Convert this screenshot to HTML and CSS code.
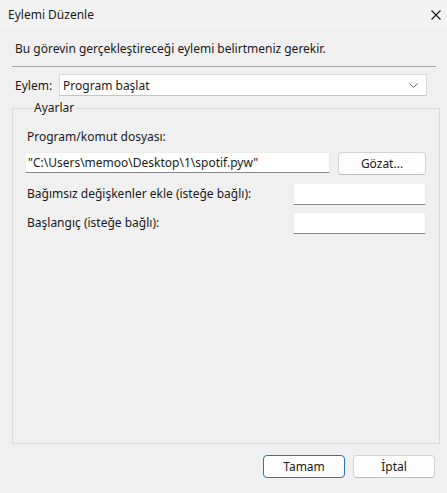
FILE: index.html
```html
<!DOCTYPE html>
<html lang="tr">
<head>
  <meta charset="UTF-8">
  <meta name="viewport" content="width=device-width, initial-scale=1.0">
  <title>Eylemi Düzenle</title>
  <link rel="stylesheet" href="styles.css">
</head>
<body>
  <div class="window">
    <div class="titlebar">
      <span class="title">Eylemi Düzenle</span>
      <svg class="close" width="10" height="10" viewBox="0 0 10 10">
        <path d="M0.5 0.5 L9.5 9.5 M9.5 0.5 L0.5 9.5" stroke="#1a1a1a" stroke-width="1.1" fill="none"/>
      </svg>
    </div>

    <p class="intro">Bu görevin gerçekleştireceği eylemi belirtmeniz gerekir.</p>
    <div class="separator"></div>

    <div class="action-row">
      <span class="label">Eylem:</span>
      <div class="select">
        <span>Program başlat</span>
        <svg width="9" height="5" viewBox="0 0 9 5">
          <path d="M0.5 0.5 L4.5 4.5 L8.5 0.5" stroke="#5f5f5f" stroke-width="1" fill="none"/>
        </svg>
      </div>
    </div>

    <fieldset class="settings">
      <legend>Ayarlar</legend>
      <div class="field-label">Program/komut dosyası:</div>
      <div class="program-row">
        <div class="textbox program">"C:\Users\memoo\Desktop\1\spotif.pyw"</div>
        <div class="button">Gözat...</div>
      </div>
      <div class="option-row">
        <span class="field-label">Bağımsız değişkenler ekle (isteğe bağlı):</span>
        <div class="textbox small"></div>
      </div>
      <div class="option-row">
        <span class="field-label">Başlangıç (isteğe bağlı):</span>
        <div class="textbox small"></div>
      </div>
    </fieldset>

    <div class="footer">
      <div class="button primary">Tamam</div>
      <div class="button">İptal</div>
    </div>
  </div>
</body>
</html>
```

FILE: styles.css
```css
* {
  box-sizing: border-box;
}

body {
  margin: 0;
  background-color: #f0f0f0;
  font-family: "Noto Sans", "Open Sans", sans-serif;
  font-size: 12px;
  color: #1a1a1a;
}

.window {
  width: 447px;
  height: 493px;
  display: flex;
  flex-direction: column;
}

.titlebar {
  height: 30px;
  display: flex;
  align-items: center;
  justify-content: space-between;
  padding: 0 6px 1px 8px;
  background-color: #f3f3f3;
}

.title {
  line-height: 16px;
}

.intro {
  margin: 11px 0 0 15px;
  line-height: 16px;
}

.separator {
  height: 1px;
  margin: 9px 11px 0 12px;
  background-color: #a9a9a9;
}

.action-row {
  display: flex;
  align-items: center;
  margin: 7px 20px 0 15px;
  gap: 7px;
}

.select {
  flex: 1;
  height: 22px;
  display: flex;
  align-items: center;
  justify-content: space-between;
  padding: 0 8px 0 3px;
  background-color: #fff;
  border: 1px solid #dadada;
  border-bottom-color: #c4c4c4;
}

.settings {
  flex: 1;
  margin: 4px 7px 0 12px;
  padding: 13px 13px 0 12px;
  border: 1px solid #d9d9d9;
  min-width: 0;
}

.settings legend {
  padding: 0 2px;
  margin-left: 7px;
  line-height: 16px;
}

.field-label {
  margin-left: 2px;
  line-height: 16px;
}

.program-row {
  display: flex;
  gap: 8px;
  margin-top: 7px;
  align-items: flex-start;
}

.textbox {
  height: 21px;
  background-color: #fff;
  border: 1px solid #ececec;
  border-bottom-color: #8a8a8a;
  line-height: 19px;
  padding-left: 2px;
}

.textbox.program {
  width: 305px;
}

.textbox.small {
  width: 133px;
  height: 22px;
}

.option-row {
  display: flex;
  justify-content: space-between;
  align-items: center;
  margin-top: 8px;
}

.option-row + .option-row {
  margin-top: 7px;
}

.button {
  width: 88px;
  height: 23px;
  display: flex;
  align-items: center;
  justify-content: center;
  background-color: #fdfdfd;
  border: 1px solid #d3d3d3;
  border-bottom-color: #c0c0c0;
  border-radius: 4px;
}

.footer {
  display: flex;
  justify-content: flex-end;
  gap: 8px;
  padding: 11px 12px 15px 0;
}

.footer .button {
  width: 82px;
}

.button.primary {
  border: 1px solid #2a74bd;
}
```
